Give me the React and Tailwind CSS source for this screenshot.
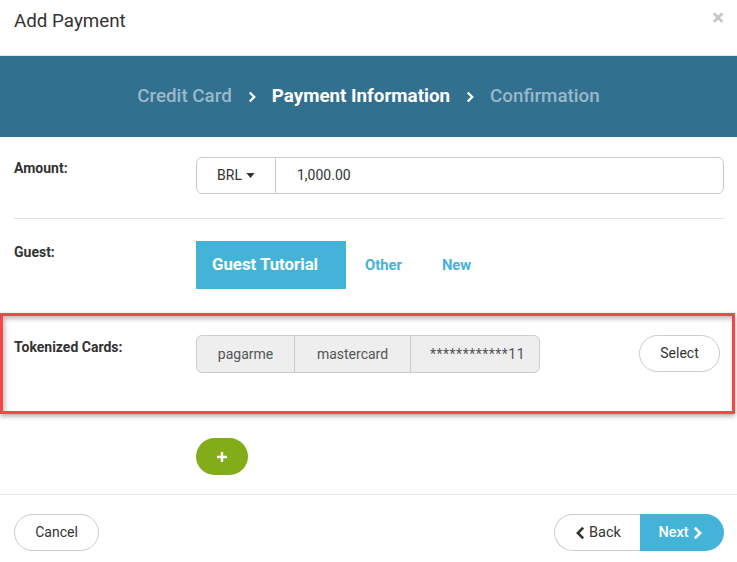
import React from 'react';

const Chevron = ({ className }) => (
  <svg viewBox="0 0 10 16" className={className} fill="none" stroke="currentColor" strokeWidth="3" strokeLinecap="square">
    <path d="M3 3l5 5-5 5" />
  </svg>
);

const ChevronLeft = ({ className }) => (
  <svg viewBox="0 0 10 16" className={className} fill="none" stroke="currentColor" strokeWidth="3" strokeLinecap="square">
    <path d="M7 3L2 8l5 5" />
  </svg>
);

export default function App() {
  return (
    <div className="w-[737px] h-[562px] bg-white overflow-hidden font-['Roboto',sans-serif] text-[#333]">
      {/* Header */}
      <div className="h-[56px] flex items-center justify-between pl-[14px] pr-[13px] border-b border-[#e5e5e5]">
        <h2 className="text-[18.8px] text-[#333] leading-none -mt-[12px]">Add Payment</h2>
        <span className="text-[#c4c4c4] text-[22px] font-bold leading-none -mt-[19px]">×</span>
      </div>

      {/* Steps band */}
      <div className="h-[81px] bg-[#31708f] flex items-center justify-center gap-[16px] text-[18.8px] font-medium">
        <span className="text-[#9ab9ca]">Credit Card</span>
        <Chevron className="w-[8px] h-[12px] text-white" />
        <span className="text-white font-bold">Payment Information</span>
        <Chevron className="w-[8px] h-[12px] text-white" />
        <span className="text-[#9ab9ca]">Confirmation</span>
      </div>

      {/* Body */}
      <div className="pr-[13px] pl-[14px]">
        {/* Amount */}
        <div className="flex pt-[20px] pb-[24px] border-b border-[#e3e3e3]">
          <label className="w-[182px] text-[14px] font-bold pt-[1px]">Amount:</label>
          <div className="flex-1 flex h-[37px] border border-[#ccc] rounded-[6px] text-[14px]">
            <div className="w-[79px] flex items-center justify-center gap-[4px] border-r border-[#ccc]">
              BRL
              <svg viewBox="0 0 10 6" className="w-[9px] h-[5px]"><path d="M0 0h10L5 6z" fill="#333" /></svg>
            </div>
            <div className="flex items-center pl-[21px]">1,000.00</div>
          </div>
        </div>

        {/* Guest */}
        <div className="flex pt-[22px] pb-[24px]">
          <label className="w-[182px] text-[14px] font-bold pt-[1px]">Guest:</label>
          <div className="flex items-center">
            <button className="w-[150px] h-[48px] bg-[#44b3d8] text-white font-bold text-[16.8px] text-left pl-[16px]">Guest Tutorial</button>
            <span className="text-[#44b3d8] font-bold text-[14.8px] ml-[19px]">Other</span>
            <span className="text-[#44b3d8] font-bold text-[14.8px] ml-[40px]">New</span>
          </div>
        </div>
      </div>

      {/* Tokenized Cards highlighted */}
      <div className="w-[735px] h-[101px] border-[3px] border-[#f2484a] shadow-[0_2px_5px_rgba(0,0,0,0.35),inset_2px_3px_4px_rgba(0,0,0,0.25)] flex pt-[19px] pl-[11px] pr-[12px]">
        <label className="w-[182px] text-[14px] font-bold pt-[2px]">Tokenized Cards:</label>
        <div className="flex h-[38px] border border-[#ccc] rounded-[6px] bg-[#eeeeee] text-[14px] text-[#555] overflow-hidden">
          <div className="w-[98px] flex items-center justify-center border-r border-[#ccc]">pagarme</div>
          <div className="w-[116px] flex items-center justify-center border-r border-[#ccc]">mastercard</div>
          <div className="w-[128px] pt-[8px] pl-[19px] pr-[2px] overflow-hidden whitespace-nowrap tracking-[0.5px]">************11</div>
        </div>
        <button className="ml-auto w-[81px] h-[37px] border border-[#ccc] rounded-full text-[14px] text-[#333] bg-white">Select</button>
      </div>

      {/* Add */}
      <div className="pl-[196px] pt-[24px] pb-[19px] border-b border-[#e5e5e5]">
        <button className="w-[52px] h-[37px] rounded-full bg-[#83ad18] flex items-center justify-center">
          <svg viewBox="0 0 10 10" className="w-[10px] h-[10px]"><path d="M3.8 0h2.4v3.8H10v2.4H6.2V10H3.8V6.2H0V3.8h3.8z" fill="#fff" /></svg>
        </button>
      </div>

      {/* Footer */}
      <div className="flex items-center justify-between pl-[14px] pr-[13px] pt-[19px]">
        <button className="w-[85px] h-[37px] border border-[#ccc] rounded-full text-[14px] text-[#333] bg-white">Cancel</button>
        <div className="flex h-[37px] text-[14.5px]">
          <button className="w-[86px] border border-[#ccc] border-r-0 rounded-l-full bg-white flex items-center justify-center gap-[4px] text-[#333] pl-[2px]">
            <ChevronLeft className="w-[9px] h-[14px]" />
            Back
          </button>
          <button className="w-[84px] rounded-r-full bg-[#44b3d8] text-white font-medium flex items-center justify-center gap-[4px] pr-[4px]">
            Next
            <Chevron className="w-[9px] h-[14px]" />
          </button>
        </div>
      </div>
    </div>
  );
}
